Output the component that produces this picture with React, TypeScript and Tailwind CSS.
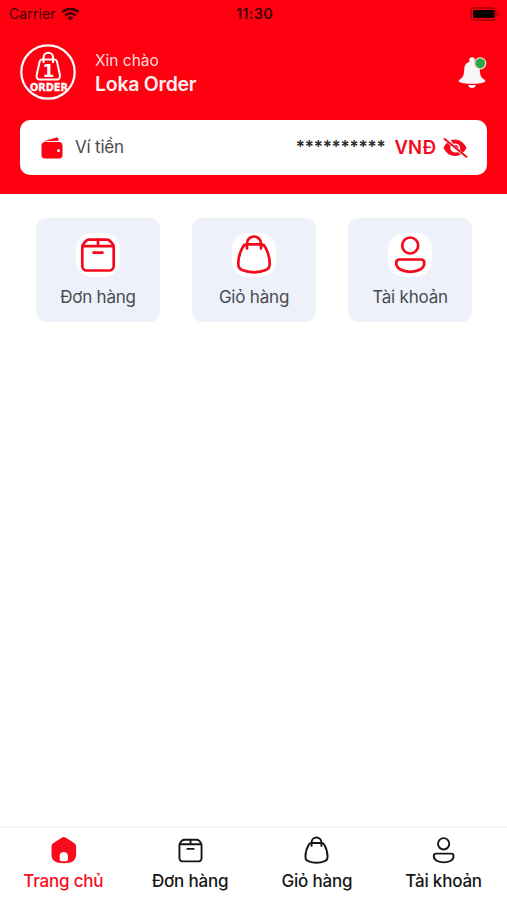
import type { ReactNode } from 'react';

type IconProps = { className?: string };

const SHORTCUTS = [
  { label: 'Đơn hàng', Icon: BoxIcon },
  { label: 'Giỏ hàng', Icon: BagIcon },
  { label: 'Tài khoản', Icon: UserIcon },
];

const TABS = [
  { label: 'Trang chủ', Icon: HomeIcon, active: true },
  { label: 'Đơn hàng', Icon: BoxIcon, active: false },
  { label: 'Giỏ hàng', Icon: BagIcon, active: false },
  { label: 'Tài khoản', Icon: UserIcon, active: false },
];

export default function App() {
  return (
    <div className="flex h-[900px] w-[507px] flex-col overflow-hidden bg-white font-['Inter','Noto_Sans',sans-serif]">
      <header className="h-[194px] shrink-0 bg-[#ff0010]">
        <StatusBar />
        <Greeting />
        <WalletCard />
      </header>

      <main className="flex flex-1 items-start gap-8 pt-6 pl-9">
        {SHORTCUTS.map(({ label, Icon }) => (
          <button
            key={label}
            className="flex h-[104px] w-[124px] flex-col items-center rounded-[10px] bg-[#eef1fa] pt-[15px]"
          >
            <span className="h-11 w-11 rounded-[16px] bg-white text-[#f5081b]">
              <Icon className="h-11 w-11" />
            </span>
            <span className="mt-2 text-[17px] leading-6 tracking-[-0.2px] whitespace-nowrap text-[#484b50]">{label}</span>
          </button>
        ))}
      </main>

      <nav className="flex h-[74px] shrink-0 border-t-2 border-[#f5f5f5] bg-white">
        {TABS.map(({ label, Icon, active }) => (
          <button
            key={label}
            className={`flex flex-1 flex-col items-center pt-[7px] ${active ? 'text-[#f70b1c]' : 'text-[#161616]'}`}
          >
            <Icon className="h-[31px] w-[31px]" />
            <span className="mt-[3px] text-[17px] leading-6 font-medium tracking-[-0.2px] whitespace-nowrap">{label}</span>
          </button>
        ))}
      </nav>
    </div>
  );
}

function StatusBar() {
  return (
    <div className="flex h-[27px] items-center pr-[7px] pl-[9px] text-[#3d0006]">
      <div className="flex flex-1 items-center gap-[5px]">
        <span className="text-[14px] tracking-[0.1px]">Carrier</span>
        <WifiIcon className="h-[14px] w-[19px]" />
      </div>
      <span className="text-[14.5px] font-semibold tracking-[0.3px]">11:30</span>
      <div className="flex flex-1 justify-end">
        <BatteryIcon className="h-[14px] w-[30px]" />
      </div>
    </div>
  );
}

function Greeting() {
  return (
    <div className="flex h-[92px] items-center px-5">
      <Logo />
      <div className="ml-[19px] flex flex-1 flex-col">
        <span className="text-[15.5px] leading-[22px] text-[#ffd9dc]">Xin chào</span>
        <span className="text-[19.5px] leading-[24px] font-semibold tracking-[-0.25px] text-[#fff0f1]">Loka Order</span>
      </div>
      <BellIcon className="h-[34px] w-[29px]" />
    </div>
  );
}

function WalletCard() {
  return (
    <div className="mx-5 mt-px flex h-[55px] items-center rounded-[10px] bg-white pr-[19px] pl-[21px]">
      <WalletIcon className="h-[22px] w-[22px] text-[#ff0010]" />
      <span className="ml-3 text-[17px] tracking-[-0.2px] text-[#4a4a4a]">Ví tiền</span>
      <div className="ml-auto flex items-center">
        <Text className="text-[17px] font-semibold tracking-[-0.2px] text-[#2b2b2b]">**********</Text>
        <Text className="ml-[9px] text-[18.5px] font-semibold text-[#f5081b]">VNĐ</Text>
        <EyeOffIcon className="ml-1.5 h-[26px] w-[26px] text-[#f5081b]" />
      </div>
    </div>
  );
}

function Text({ children, className }: { children: ReactNode; className: string }) {
  return <span className={`whitespace-nowrap ${className}`}>{children}</span>;
}

function Logo() {
  return (
    <svg viewBox="0 0 56 56" className="mb-0.5 h-14 w-14" fill="none" stroke="#fff">
      <circle cx="28" cy="28" r="26.7" strokeWidth="2.2" />
      <path
        d="M22 15.500h12.600c1.200 0 2 .7 2.300 1.900l3 13.600c.5 2.700-.9 4.600-3.300 4.600H20c-2.400 0-3.800-1.900-3.300-4.600l3-13.600c.3-1.200 1.100-1.900 2.300-1.900Z"
        strokeWidth="2"
      />
      <path d="M23.600 19v-5.600a4.700 4.700 0 0 1 9.400 0V19" strokeWidth="2" />
      <text
        x="28.300"
        y="32.800"
        fill="#fff"
        stroke="none"
        textAnchor="middle"
        className="font-['DejaVu_Sans',sans-serif] text-[17px] font-bold"
      >
        1
      </text>
      <text
        x="10"
        y="46.800"
        fill="#fff"
        stroke="#fff"
        strokeWidth="0.300"
        textLength="38"
        lengthAdjust="spacingAndGlyphs"
        className="font-['DejaVu_Sans',sans-serif] text-[9.800px] font-bold"
      >
        ORDER
      </text>
    </svg>
  );
}

function WifiIcon({ className }: IconProps) {
  return (
    <svg viewBox="0 0 19 14" className={className} fill="none" stroke="currentColor" strokeWidth="2.5">
      <path d="M1.200 5.200c4.700-4.400 11.900-4.400 16.600 0" />
      <path d="M4.200 8.500c3-2.900 7.600-2.900 10.600 0" />
      <path d="M9.500 13.600 6.600 10.700c1.600-1.500 4.200-1.500 5.800 0Z" fill="currentColor" stroke="none" />
    </svg>
  );
}

function BatteryIcon({ className }: IconProps) {
  return (
    <svg viewBox="0 0 30 14" className={className}>
      <rect x="1" y="1" width="25" height="12" rx="3.500" fill="none" stroke="#a5000b" strokeWidth="1.300" />
      <rect x="3" y="3" width="21.500" height="8" rx="1.500" fill="#050000" />
      <path d="M27.500 4.800c1.700.6 1.700 3.800 0 4.400Z" fill="#a5000b" />
    </svg>
  );
}

function BellIcon({ className }: IconProps) {
  return (
    <svg viewBox="0 0 29 34" className={className}>
      <circle cx="14" cy="4" r="2.800" fill="#f7f7f7" />
      <path
        d="M14 5.500c4.700 0 7.500 2.900 7.700 7.300.3 6.200 1 8.700 4.900 11 1 .7.800 2-.4 2.400-6.500 2-17.900 2-24.400 0-1.200-.4-1.400-1.700-.4-2.400C5.300 21.500 6 19 6.300 12.800 6.500 8.400 9.300 5.500 14 5.500Z"
        fill="#f7f7f7"
      />
      <path d="M10.200 28.700c2.500.3 5.100.3 7.600 0-.2 4.400-7.400 4.400-7.600 0Z" fill="#f7f7f7" />
      <circle cx="22.200" cy="7.300" r="5.500" fill="#27a844" stroke="#f3d9cf" strokeWidth="1.300" />
    </svg>
  );
}

function WalletIcon({ className }: IconProps) {
  return (
    <svg viewBox="0 0 22 22" className={className} fill="currentColor">
      <path d="M2.500 4.300 14.800.7c1.500-.4 2.600.3 2.700 1.700v1.300L2.500 4.300Z" />
      <path
        fillRule="evenodd"
        d="M4 5h14a3.500 3.500 0 0 1 3.500 3.500v9.500a3.500 3.500 0 0 1-3.500 3.500H4A3.500 3.500 0 0 1 .5 18V8.500A3.500 3.500 0 0 1 4 5Zm13.500 6.900a1.500 1.500 0 1 0 0 3 1.500 1.500 0 0 0 0-3Z"
      />
    </svg>
  );
}

function EyeOffIcon({ className }: IconProps) {
  return (
    <svg viewBox="0 0 26 26" className={className} fill="none" stroke="currentColor">
      <path d="m2 3.500 23 18.700" strokeWidth="2" />
      <path d="M8.600 5.300c6.700-2.200 12.500.8 15.900 7.500-.9 1.900-2 3.300-3.500 4.700l-3.200-2.700c1.300-4.100-2.500-7.300-6.300-5.800Z" fill="currentColor" stroke="none" />
      <path d="M4.900 7.800C3.500 9.200 2.400 10.900 1.500 12.800c3.500 7.700 10.600 10.100 17.300 6.700l-3.100-2.500c-4.400 2-8.500-1.900-7.100-6.200Z" fill="currentColor" stroke="none" />
      <path d="M13 9.900c2.300-.1 3.800 1.600 3.400 3.700l-4.300-3.500Z" fill="currentColor" stroke="none" />
    </svg>
  );
}

function BoxIcon({ className }: IconProps) {
  return (
    <svg viewBox="0 0 44 44" className={className} fill="none" stroke="currentColor" strokeWidth="2.700" strokeLinecap="round" strokeLinejoin="round">
      <path d="M6.300 14.500c0-1.800.3-2.700 1.500-4.100l2.200-2.400c.8-.9 1.500-1.300 3-1.300h18c1.500 0 2.200.4 3 1.300l2.200 2.400c1.200 1.400 1.500 2.300 1.500 4.100v18.500a4.500 4.500 0 0 1-4.500 4.500H10.800a4.500 4.500 0 0 1-4.500-4.500Z" />
      <path d="M6.800 13.200h30.400M22 6.700v6.500M17.500 19.700h9" />
    </svg>
  );
}

function BagIcon({ className }: IconProps) {
  return (
    <svg viewBox="0 0 44 44" className={className} fill="none" stroke="currentColor" strokeWidth="2.700" strokeLinecap="round" strokeLinejoin="round">
      <path d="M15 11.300h14c2 0 3.200.8 4.100 2.500 3 5.300 4.700 11 4.600 17.300 0 3-1.300 5-4 6-6.700 3-16.700 3-23.400 0-2.700-1-4-3-4-6-.1-6.300 1.600-12 4.600-17.300.9-1.700 2.100-2.500 4.100-2.500Z" />
      <path d="M15 15.500v-5a7 7 0 0 1 14 0v5" />
    </svg>
  );
}

function UserIcon({ className }: IconProps) {
  return (
    <svg viewBox="0 0 44 44" className={className} fill="none" stroke="currentColor" strokeWidth="2.700">
      <circle cx="22.200" cy="12.500" r="8" />
      <path d="M11.500 26.500h21.500c2.100 0 3.300 1.200 3.300 3.200 0 6-6.500 9.100-14 9.100S8.200 35.700 8.200 29.700c0-2 1.200-3.200 3.300-3.200Z" />
    </svg>
  );
}

function HomeIcon({ className }: IconProps) {
  return (
    <svg viewBox="0 0 31 31" className={className} fill="currentColor">
      <path
        fillRule="evenodd"
        d="M13.700 2.800c1.600-1 2.700-1 4.300 0l7.400 4.700c2 1.200 2.700 2.500 2.700 4.500v7.500c0 6.500-4.500 8.700-12.300 8.700S3.500 26 3.500 19.500V12c0-2 .7-3.300 2.700-4.500ZM11.700 20.500v3.700c0 1.300.7 2 2 2h4.200c1.300 0 2-.7 2-2v-3.700c0-4.800-8.200-4.800-8.200 0Z"
      />
    </svg>
  );
}
